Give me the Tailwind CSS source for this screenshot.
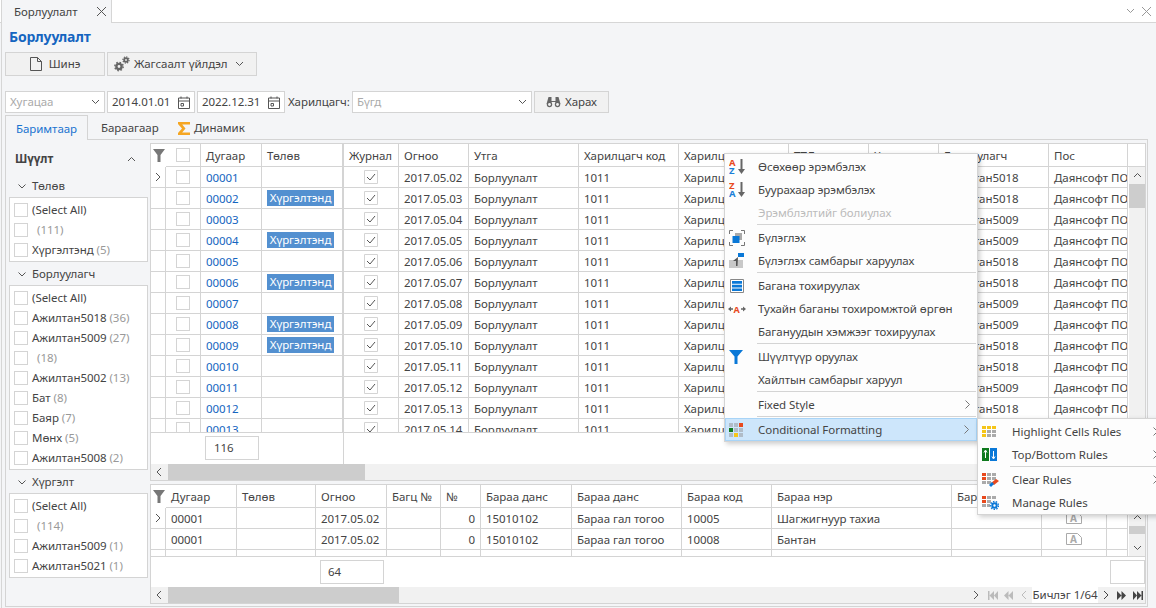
<!DOCTYPE html>
<html lang="mn">
<head>
<meta charset="utf-8">
<title>Борлуулалт</title>
<script src="https://cdn.jsdelivr.net/npm/@tailwindcss/browser@4"></script>
</head>
<body class="relative w-[1156px] h-[608px] overflow-hidden bg-[#f4f5f7] text-[11.5px] tracking-[-0.05px] leading-[20px] text-[#444] font-['Noto_Sans',sans-serif]">

<!-- document tab bar -->
<div class="flex h-[23px] bg-white border-b border-[#d6d6d6]">
  <div class="flex items-center w-[111px] pl-[12px] bg-[#f4f5f7] border-l border-r border-[#d6d6d6] ml-px -mb-px">
    <span class="w-[82px]">Борлуулалт</span>
    <svg width="11" height="11" viewBox="0 0 11 11" class="stroke-[#555]"><path d="M1 1l9 9M10 1l-9 9"/></svg>
  </div>
  <div class="flex-1 flex items-center justify-end gap-[6px] pr-[4px]">
    <svg width="9" height="6" viewBox="0 0 9 6" class="fill-none stroke-[#999]"><path d="M1 1l3.500 3.500L8 1"/></svg>
    <svg width="11" height="11" viewBox="0 0 11 11" class="stroke-[#999]"><path d="M1 1l9 9M10 1l-9 9"/></svg>
  </div>
</div>

<div class="h-[585px] ml-px pl-[3px] border-l border-[#d6d6d6]">
  <div class="h-[29px] pt-[4px] pl-[4px] text-[14px] font-bold tracking-[-0.2px] text-[#1565c0]">Борлуулалт</div>

  <!-- toolbar -->
  <div class="flex gap-[2px] h-[24px]">
    <button class="flex items-center justify-center gap-[7px] w-[100px] border border-[#d4d4d4] bg-[#f1f1f1]">
      <svg width="12" height="14" viewBox="0 0 12 14" class="fill-none stroke-[#555]"><path d="M.5.500h7l4 4v9H.500zM7.500.500v4h4"/></svg>
      Шинэ
    </button>
    <button class="flex items-center w-[150px] pl-[6px] gap-[4px] border border-[#d4d4d4] bg-[#f1f1f1]">
      <svg width="16" height="16" viewBox="0 0 16 16" class="fill-none stroke-[#666]"><circle cx="5" cy="10.500" r="2.600" stroke-width="2.400"/><circle cx="5" cy="10.500" r="4.200" stroke-width="1.400" stroke-dasharray="1.600 1.700"/><circle cx="12" cy="4" r="1.800" stroke-width="1.800"/><circle cx="12" cy="4" r="3.100" stroke-width="1.200" stroke-dasharray="1.300 1.100"/></svg>
      <span>Жагсаалт үйлдэл</span>
      <svg width="9" height="6" viewBox="0 0 9 6" class="ml-[3px] fill-none stroke-[#555]"><path d="M1 1l3.500 3.500L8 1"/></svg>
    </button>
  </div>

  <!-- filter row -->
  <div class="flex items-center gap-[2px] h-[22px] mt-[15px]">
    <div class="flex items-center justify-between w-[100px] h-full px-[4px] bg-white border border-[#d4d4d4] text-[#aaa]">Хугацаа
      <svg width="9" height="6" viewBox="0 0 9 6" class="fill-none stroke-[#555]"><path d="M1 1l3.500 3.500L8 1"/></svg></div>
    <div class="flex items-center justify-between w-[88px] h-full px-[4px] bg-white border border-[#d4d4d4]">2014.01.01
      <svg width="12" height="13" viewBox="0 0 12 13" class="fill-none stroke-[#555]"><path d="M.5 2h11v10.500H.500zM.5 5h11M3 .5v2M9 .5v2M3 7.500h2.500v2.500H3z"/></svg></div>
    <div class="flex items-center justify-between w-[88px] h-full px-[4px] bg-white border border-[#d4d4d4]">2022.12.31
      <svg width="12" height="13" viewBox="0 0 12 13" class="fill-none stroke-[#555]"><path d="M.5 2h11v10.500H.500zM.5 5h11M3 .5v2M9 .5v2M3 7.500h2.500v2.500H3z"/></svg></div>
    <span class="w-[63px] pl-[1px] whitespace-nowrap">Харилцагч:</span>
    <div class="flex items-center justify-between w-[180px] h-full px-[4px] bg-white border border-[#d4d4d4] text-[#aaa]">Бүгд
      <svg width="9" height="6" viewBox="0 0 9 6" class="fill-none stroke-[#555]"><path d="M1 1l3.500 3.500L8 1"/></svg></div>
    <button class="flex items-center justify-center gap-[4px] w-[75px] h-full border border-[#d4d4d4] bg-[#f1f1f1]">
      <svg width="15" height="12" viewBox="0 0 15 12" class="fill-[#666]"><path d="M2.500 1h3v4h4V1h3l2 7H9.500V6h-4v2H.500z"/><circle cx="3.500" cy="8.500" r="2.700"/><circle cx="11.500" cy="8.500" r="2.700"/><circle cx="3.500" cy="8.500" r="1.400" fill="#f1f1f1"/><circle cx="11.500" cy="8.500" r="1.400" fill="#f1f1f1"/></svg>
      Харах
    </button>
  </div>

  <!-- tabs -->
  <div class="flex h-[24px] mt-[2px] relative z-10">
    <div class="flex items-center justify-center w-[83px] h-[25px] pt-[2px] border border-b-0 border-[#d4d4d4] bg-[#f4f5f7] text-[#1a73d0]">Баримтаар</div>
    <div class="flex items-center w-[77px] pl-[13px] pt-[2px]">Бараагаар</div>
    <div class="flex items-center pl-[13px] pt-[2px] gap-[4px]">
      <svg width="12" height="13" viewBox="0 0 12 13" class="fill-[#f5a623]"><path d="M0 0h12v2.500H4.200L7.500 6.500 4.200 10.500H12V13H0V11L4 6.500 0 2z"/></svg>
      Динамик
    </div>
  </div>

  <!-- panel -->
  <div class="flex w-[1143px] h-[468px] border border-[#d4d4d4]">
    <!-- left filter panel -->
    <div class="w-[144px] shrink-0 pl-[3px] pr-[2px]">
      <div class="flex items-center justify-between h-[36px] pt-[2px] pl-[6px] pr-[12px] font-bold">Шүүлт
        <svg width="9" height="6" viewBox="0 0 9 6" class="fill-none stroke-[#555]"><path d="M1 5l3.500-3.500L8 5"/></svg></div>

      <div class="flex items-center gap-[6px] h-[20px] pl-[9px]"><svg width="8" height="5" viewBox="0 0 8 5" class="fill-none stroke-[#555]"><path d="M.5.500L4 4 7.500.500"/></svg>Төлөв</div>
      <div class="h-[65px] mt-px pt-[2px] pl-[4px] bg-white border border-[#d4d4d4]">
        <div class="flex items-center gap-[4px] h-[20px]"><i class="w-[14px] h-[14px] border border-[#d4d4d4]"></i>(Select All)</div>
        <div class="flex items-center gap-[4px] h-[20px] text-[#999]"><i class="w-[14px] h-[14px] border border-[#d4d4d4]"></i><span class="pl-[5px]">(111)</span></div>
        <div class="flex items-center gap-[4px] h-[20px]"><i class="w-[14px] h-[14px] border border-[#d4d4d4]"></i><span>Хүргэлтэнд <span class="text-[#999]">(5)</span></span></div>
      </div>

      <div class="flex items-center gap-[6px] h-[20px] mt-[2px] pl-[9px]"><svg width="8" height="5" viewBox="0 0 8 5" class="fill-none stroke-[#555]"><path d="M.5.500L4 4 7.500.500"/></svg>Борлуулагч</div>
      <div class="h-[185px] mt-px pt-[2px] pl-[4px] bg-white border border-[#d4d4d4]">
        <div class="flex items-center gap-[4px] h-[20px]"><i class="w-[14px] h-[14px] border border-[#d4d4d4]"></i>(Select All)</div>
        <div class="flex items-center gap-[4px] h-[20px]"><i class="w-[14px] h-[14px] border border-[#d4d4d4]"></i><span>Ажилтан5018 <span class="text-[#999]">(36)</span></span></div>
        <div class="flex items-center gap-[4px] h-[20px]"><i class="w-[14px] h-[14px] border border-[#d4d4d4]"></i><span>Ажилтан5009 <span class="text-[#999]">(27)</span></span></div>
        <div class="flex items-center gap-[4px] h-[20px] text-[#999]"><i class="w-[14px] h-[14px] border border-[#d4d4d4]"></i><span class="pl-[5px]">(18)</span></div>
        <div class="flex items-center gap-[4px] h-[20px]"><i class="w-[14px] h-[14px] border border-[#d4d4d4]"></i><span>Ажилтан5002 <span class="text-[#999]">(13)</span></span></div>
        <div class="flex items-center gap-[4px] h-[20px]"><i class="w-[14px] h-[14px] border border-[#d4d4d4]"></i><span>Бат <span class="text-[#999]">(8)</span></span></div>
        <div class="flex items-center gap-[4px] h-[20px]"><i class="w-[14px] h-[14px] border border-[#d4d4d4]"></i><span>Баяр <span class="text-[#999]">(7)</span></span></div>
        <div class="flex items-center gap-[4px] h-[20px]"><i class="w-[14px] h-[14px] border border-[#d4d4d4]"></i><span>Мөнх <span class="text-[#999]">(5)</span></span></div>
        <div class="flex items-center gap-[4px] h-[20px]"><i class="w-[14px] h-[14px] border border-[#d4d4d4]"></i><span>Ажилтан5008 <span class="text-[#999]">(2)</span></span></div>
      </div>

      <div class="flex items-center gap-[6px] h-[20px] mt-[2px] pl-[9px]"><svg width="8" height="5" viewBox="0 0 8 5" class="fill-none stroke-[#555]"><path d="M.5.500L4 4 7.500.500"/></svg>Хүргэлт</div>
      <div class="h-[85px] mt-px pt-[2px] pl-[4px] bg-white border border-[#d4d4d4]">
        <div class="flex items-center gap-[4px] h-[20px]"><i class="w-[14px] h-[14px] border border-[#d4d4d4]"></i>(Select All)</div>
        <div class="flex items-center gap-[4px] h-[20px] text-[#999]"><i class="w-[14px] h-[14px] border border-[#d4d4d4]"></i><span class="pl-[5px]">(114)</span></div>
        <div class="flex items-center gap-[4px] h-[20px]"><i class="w-[14px] h-[14px] border border-[#d4d4d4]"></i><span>Ажилтан5009 <span class="text-[#999]">(1)</span></span></div>
        <div class="flex items-center gap-[4px] h-[20px]"><i class="w-[14px] h-[14px] border border-[#d4d4d4]"></i><span>Ажилтан5021 <span class="text-[#999]">(1)</span></span></div>
      </div>
    </div>

    <!-- grids -->
    <div class="w-[996px] shrink-0 pt-[3px]">
      <!-- master grid -->
      <div class="h-[338px] bg-white border border-[#d4d4d4] overflow-hidden">
        <div class="relative h-[289px] overflow-hidden border-b border-[#d4d4d4]">
          <div class="grid grid-cols-[15px_35px_61px_81px_1px_55px_70px_110px_100px_110px_80px_70px_110px_79px_17px] h-[23px] *:border-r *:border-b *:border-[#d4d4d4] *:px-[5px] *:overflow-hidden *:whitespace-nowrap leading-[24px]">
            <div class="!border-0 !px-0 flex items-center justify-center"><svg width="12" height="13" viewBox="0 0 12 13" class="fill-[#777]"><path d="M0 0h12L7.500 6v7h-3V6z"/></svg></div>
            <div class="flex items-center justify-center"><i class="w-[14px] h-[14px] border border-[#d4d4d4]"></i></div>
            <div>Дугаар</div><div>Төлөв</div><div class="!px-0"></div><div>Журнал</div><div>Огноо</div><div>Утга</div><div>Харилцагч код</div><div>Харилцагч</div><div>ТТД</div><div>Хаяг</div><div>Борлуулагч</div><div>Пос</div><div class="!border-r-0"></div>
          </div>
          <div class="grid grid-cols-[15px_35px_61px_81px_1px_55px_70px_110px_100px_110px_80px_70px_110px_79px] auto-rows-[21px] leading-[22px] *:border-r *:border-b *:border-[#d4d4d4] *:px-[5px] *:overflow-hidden *:whitespace-nowrap">
            <div class="!px-0 flex items-center justify-center"><svg width="6" height="10" viewBox="0 0 6 10" class="fill-none stroke-[#555]"><path d="M1 1l4 4-4 4"/></svg></div><div class="flex items-center justify-center"><i class="w-[14px] h-[14px] border border-[#d4d4d4]"></i></div><div class="text-[#1565c0]">00001</div><div></div><div class="!px-0"></div><div class="flex items-center justify-center"><svg width="14" height="14" viewBox="0 0 14 14" class="fill-none stroke-[#555]"><path d="M.5.500h13v13H.500z" stroke="#d4d4d4"/><path d="M3 7l3 3 5-6"/></svg></div><div>2017.05.02</div><div>Борлуулалт</div><div>1011</div><div>Харилцагч</div><div></div><div></div><div>Ажилтан5018</div><div>Даянсофт ПОС</div>
            <div class="!px-0"></div><div class="flex items-center justify-center"><i class="w-[14px] h-[14px] border border-[#d4d4d4]"></i></div><div class="text-[#1565c0]">00002</div><div class="flex items-center"><span class="w-[67px] h-[16px] leading-[16px] text-center text-white bg-[#5390d0]">Хүргэлтэнд</span></div><div class="!px-0"></div><div class="flex items-center justify-center"><svg width="14" height="14" viewBox="0 0 14 14" class="fill-none stroke-[#555]"><path d="M.5.500h13v13H.500z" stroke="#d4d4d4"/><path d="M3 7l3 3 5-6"/></svg></div><div>2017.05.03</div><div>Борлуулалт</div><div>1011</div><div>Харилцагч</div><div></div><div></div><div>Ажилтан5018</div><div>Даянсофт ПОС</div>
            <div class="!px-0"></div><div class="flex items-center justify-center"><i class="w-[14px] h-[14px] border border-[#d4d4d4]"></i></div><div class="text-[#1565c0]">00003</div><div></div><div class="!px-0"></div><div class="flex items-center justify-center"><svg width="14" height="14" viewBox="0 0 14 14" class="fill-none stroke-[#555]"><path d="M.5.500h13v13H.500z" stroke="#d4d4d4"/><path d="M3 7l3 3 5-6"/></svg></div><div>2017.05.04</div><div>Борлуулалт</div><div>1011</div><div>Харилцагч</div><div></div><div></div><div>Ажилтан5009</div><div>Даянсофт ПОС</div>
            <div class="!px-0"></div><div class="flex items-center justify-center"><i class="w-[14px] h-[14px] border border-[#d4d4d4]"></i></div><div class="text-[#1565c0]">00004</div><div class="flex items-center"><span class="w-[67px] h-[16px] leading-[16px] text-center text-white bg-[#5390d0]">Хүргэлтэнд</span></div><div class="!px-0"></div><div class="flex items-center justify-center"><svg width="14" height="14" viewBox="0 0 14 14" class="fill-none stroke-[#555]"><path d="M.5.500h13v13H.500z" stroke="#d4d4d4"/><path d="M3 7l3 3 5-6"/></svg></div><div>2017.05.05</div><div>Борлуулалт</div><div>1011</div><div>Харилцагч</div><div></div><div></div><div>Ажилтан5009</div><div>Даянсофт ПОС</div>
            <div class="!px-0"></div><div class="flex items-center justify-center"><i class="w-[14px] h-[14px] border border-[#d4d4d4]"></i></div><div class="text-[#1565c0]">00005</div><div></div><div class="!px-0"></div><div class="flex items-center justify-center"><svg width="14" height="14" viewBox="0 0 14 14" class="fill-none stroke-[#555]"><path d="M.5.500h13v13H.500z" stroke="#d4d4d4"/><path d="M3 7l3 3 5-6"/></svg></div><div>2017.05.06</div><div>Борлуулалт</div><div>1011</div><div>Харилцагч</div><div></div><div></div><div>Ажилтан5018</div><div>Даянсофт ПОС</div>
            <div class="!px-0"></div><div class="flex items-center justify-center"><i class="w-[14px] h-[14px] border border-[#d4d4d4]"></i></div><div class="text-[#1565c0]">00006</div><div class="flex items-center"><span class="w-[67px] h-[16px] leading-[16px] text-center text-white bg-[#5390d0]">Хүргэлтэнд</span></div><div class="!px-0"></div><div class="flex items-center justify-center"><svg width="14" height="14" viewBox="0 0 14 14" class="fill-none stroke-[#555]"><path d="M.5.500h13v13H.500z" stroke="#d4d4d4"/><path d="M3 7l3 3 5-6"/></svg></div><div>2017.05.07</div><div>Борлуулалт</div><div>1011</div><div>Харилцагч</div><div></div><div></div><div>Ажилтан5018</div><div>Даянсофт ПОС</div>
            <div class="!px-0"></div><div class="flex items-center justify-center"><i class="w-[14px] h-[14px] border border-[#d4d4d4]"></i></div><div class="text-[#1565c0]">00007</div><div></div><div class="!px-0"></div><div class="flex items-center justify-center"><svg width="14" height="14" viewBox="0 0 14 14" class="fill-none stroke-[#555]"><path d="M.5.500h13v13H.500z" stroke="#d4d4d4"/><path d="M3 7l3 3 5-6"/></svg></div><div>2017.05.08</div><div>Борлуулалт</div><div>1011</div><div>Харилцагч</div><div></div><div></div><div>Ажилтан5009</div><div>Даянсофт ПОС</div>
            <div class="!px-0"></div><div class="flex items-center justify-center"><i class="w-[14px] h-[14px] border border-[#d4d4d4]"></i></div><div class="text-[#1565c0]">00008</div><div class="flex items-center"><span class="w-[67px] h-[16px] leading-[16px] text-center text-white bg-[#5390d0]">Хүргэлтэнд</span></div><div class="!px-0"></div><div class="flex items-center justify-center"><svg width="14" height="14" viewBox="0 0 14 14" class="fill-none stroke-[#555]"><path d="M.5.500h13v13H.500z" stroke="#d4d4d4"/><path d="M3 7l3 3 5-6"/></svg></div><div>2017.05.09</div><div>Борлуулалт</div><div>1011</div><div>Харилцагч</div><div></div><div></div><div>Ажилтан5009</div><div>Даянсофт ПОС</div>
            <div class="!px-0"></div><div class="flex items-center justify-center"><i class="w-[14px] h-[14px] border border-[#d4d4d4]"></i></div><div class="text-[#1565c0]">00009</div><div class="flex items-center"><span class="w-[67px] h-[16px] leading-[16px] text-center text-white bg-[#5390d0]">Хүргэлтэнд</span></div><div class="!px-0"></div><div class="flex items-center justify-center"><svg width="14" height="14" viewBox="0 0 14 14" class="fill-none stroke-[#555]"><path d="M.5.500h13v13H.500z" stroke="#d4d4d4"/><path d="M3 7l3 3 5-6"/></svg></div><div>2017.05.10</div><div>Борлуулалт</div><div>1011</div><div>Харилцагч</div><div></div><div></div><div>Ажилтан5018</div><div>Даянсофт ПОС</div>
            <div class="!px-0"></div><div class="flex items-center justify-center"><i class="w-[14px] h-[14px] border border-[#d4d4d4]"></i></div><div class="text-[#1565c0]">00010</div><div></div><div class="!px-0"></div><div class="flex items-center justify-center"><svg width="14" height="14" viewBox="0 0 14 14" class="fill-none stroke-[#555]"><path d="M.5.500h13v13H.500z" stroke="#d4d4d4"/><path d="M3 7l3 3 5-6"/></svg></div><div>2017.05.11</div><div>Борлуулалт</div><div>1011</div><div>Харилцагч</div><div></div><div></div><div>Ажилтан5018</div><div>Даянсофт ПОС</div>
            <div class="!px-0"></div><div class="flex items-center justify-center"><i class="w-[14px] h-[14px] border border-[#d4d4d4]"></i></div><div class="text-[#1565c0]">00011</div><div></div><div class="!px-0"></div><div class="flex items-center justify-center"><svg width="14" height="14" viewBox="0 0 14 14" class="fill-none stroke-[#555]"><path d="M.5.500h13v13H.500z" stroke="#d4d4d4"/><path d="M3 7l3 3 5-6"/></svg></div><div>2017.05.12</div><div>Борлуулалт</div><div>1011</div><div>Харилцагч</div><div></div><div></div><div>Ажилтан5009</div><div>Даянсофт ПОС</div>
            <div class="!px-0"></div><div class="flex items-center justify-center"><i class="w-[14px] h-[14px] border border-[#d4d4d4]"></i></div><div class="text-[#1565c0]">00012</div><div></div><div class="!px-0"></div><div class="flex items-center justify-center"><svg width="14" height="14" viewBox="0 0 14 14" class="fill-none stroke-[#555]"><path d="M.5.500h13v13H.500z" stroke="#d4d4d4"/><path d="M3 7l3 3 5-6"/></svg></div><div>2017.05.13</div><div>Борлуулалт</div><div>1011</div><div>Харилцагч</div><div></div><div></div><div>Ажилтан5018</div><div>Даянсофт ПОС</div>
            <div class="!px-0"></div><div class="flex items-center justify-center"><i class="w-[14px] h-[14px] border border-[#d4d4d4]"></i></div><div class="text-[#1565c0]">00013</div><div></div><div class="!px-0"></div><div class="flex items-center justify-center"><svg width="14" height="14" viewBox="0 0 14 14" class="fill-none stroke-[#555]"><path d="M.5.500h13v13H.500z" stroke="#d4d4d4"/><path d="M3 7l3 3 5-6"/></svg></div><div>2017.05.14</div><div>Борлуулалт</div><div>1011</div><div>Харилцагч</div><div></div><div></div><div>Ажилтан5018</div><div>Даянсофт ПОС</div>
          </div>
          <!-- vertical scrollbar lies over the row area -->
          <div class="absolute right-0 top-[23px] bottom-0 w-[16px] bg-[#f1f1f1]">
            <svg width="9" height="6" viewBox="0 0 9 6" class="mx-auto mt-[5px] fill-none stroke-[#555]"><path d="M1 5l3.500-3.500L8 5"/></svg>
            <div class="h-[24px] mt-[6px] bg-[#cdcdcd]"></div>
          </div>
        </div>
        <div class="flex h-[31px]">
          <div class="w-[193px] h-full border-r border-[#d4d4d4] pl-[54px] pt-[3px]"><div class="w-[54px] h-[24px] pl-[8px] leading-[22px] border border-[#d4d4d4]">116</div></div>
        </div>
        <div class="flex items-center h-[16px] bg-[#f1f1f1]">
          <svg width="6" height="10" viewBox="0 0 6 10" class="ml-[5px] mr-[6px] fill-none stroke-[#555]"><path d="M5 1L1 5l4 4"/></svg>
          <div class="w-[197px] h-full bg-[#cdcdcd]"></div>
        </div>
      </div>

      <!-- detail grid -->
      <div class="h-[120px] mt-[3px] bg-white border border-[#d4d4d4] overflow-hidden">
        <div class="relative h-[72px] overflow-hidden border-b border-[#d4d4d4]">
          <div class="grid grid-cols-[15px_71px_79px_71px_54px_40px_91px_110px_90px_180px_90px_65px_21px_17px] h-[23px] *:border-r *:border-b *:border-[#d4d4d4] *:px-[5px] *:overflow-hidden *:whitespace-nowrap leading-[24px]">
            <div class="!border-0 !px-0 flex items-center justify-center"><svg width="12" height="13" viewBox="0 0 12 13" class="fill-[#777]"><path d="M0 0h12L7.500 6v7h-3V6z"/></svg></div>
            <div>Дугаар</div><div>Төлөв</div><div>Огноо</div><div>Багц №</div><div>№</div><div>Бараа данс</div><div>Бараа данс</div><div>Бараа код</div><div>Бараа нэр</div><div>Барааны</div><div></div><div></div><div></div>
          </div>
          <div class="grid grid-cols-[15px_71px_79px_71px_54px_40px_91px_110px_90px_180px_90px_65px_21px] auto-rows-[21px] leading-[21px] *:border-r *:border-b *:border-[#d4d4d4] *:px-[5px] *:overflow-hidden *:whitespace-nowrap">
            <div class="!px-0 flex items-center justify-center"><svg width="6" height="10" viewBox="0 0 6 10" class="fill-none stroke-[#555]"><path d="M1 1l4 4-4 4"/></svg></div><div>00001</div><div></div><div>2017.05.02</div><div></div><div class="text-right">0</div><div>15010102</div><div>Бараа гал тогоо</div><div>10005</div><div>Шагжигнуур тахиа</div><div></div><div class="flex items-center justify-center"><svg width="16" height="12" viewBox="0 0 16 12"><path d="M.5.500h11l4 4v7H.500z" fill="#fff" stroke="#aaa"/><text x="4" y="10" font-size="10" font-weight="700" fill="#aaa">A</text></svg></div><div></div>
            <div class="!px-0"></div><div>00001</div><div></div><div>2017.05.02</div><div></div><div class="text-right">0</div><div>15010102</div><div>Бараа гал тогоо</div><div>10008</div><div>Бантан</div><div></div><div class="flex items-center justify-center"><svg width="16" height="12" viewBox="0 0 16 12"><path d="M.5.500h11l4 4v7H.500z" fill="#fff" stroke="#aaa"/><text x="4" y="10" font-size="10" font-weight="700" fill="#aaa">A</text></svg></div><div></div>
            <div class="!px-0"></div><div></div><div></div><div></div><div></div><div></div><div></div><div></div><div></div><div></div><div></div><div></div><div></div>
          </div>
          <div class="absolute right-0 top-[23px] bottom-0 w-[16px] flex flex-col items-center bg-[#f1f1f1]">
            <svg width="9" height="6" viewBox="0 0 9 6" class="mt-[6px] fill-none stroke-[#555]"><path d="M1 5l3.500-3.500L8 5"/></svg>
            <div class="w-full h-[8px] mt-[6px] bg-[#cdcdcd]"></div>
            <svg width="9" height="6" viewBox="0 0 9 6" class="mt-[11px] fill-none stroke-[#555]"><path d="M1 1l3.500 3.500L8 1"/></svg>
          </div>
        </div>
        <div class="flex items-center justify-between h-[30px] pl-[169px]">
          <div class="w-[64px] h-[24px] pl-[7px] leading-[22px] border border-[#d4d4d4]">64</div>
          <div class="w-[35px] h-[24px] border border-[#d4d4d4]"></div>
        </div>
        <div class="flex items-center h-[16px] bg-[#f1f1f1]">
          <svg width="6" height="10" viewBox="0 0 6 10" class="ml-[5px] mr-[6px] fill-none stroke-[#555]"><path d="M5 1L1 5l4 4"/></svg>
          <div class="w-[231px] h-full bg-[#cdcdcd]"></div>
          <div class="flex-1"></div>
          <svg width="6" height="10" viewBox="0 0 6 10" class="mr-[9px] fill-none stroke-[#555]"><path d="M1 1l4 4-4 4"/></svg>
          <svg width="10" height="9" viewBox="0 0 10 9" class="mr-[6px] fill-[#bbb]"><path d="M0 0h1.500v9H0zM6 0v9L1.500 4.500zM10 0v9L6 4.500z"/></svg>
          <svg width="9" height="9" viewBox="0 0 9 9" class="mr-[8px] fill-[#bbb]"><path d="M4.500 0v9L0 4.500zM9 0v9L4.500 4.500z"/></svg>
          <svg width="6" height="10" viewBox="0 0 6 10" class="mr-[5px] fill-none stroke-[#bbb]"><path d="M5 1L1 5l4 4"/></svg>
          <div class="w-[66px] h-full bg-white leading-[16px] text-center whitespace-nowrap">Бичлэг 1/64</div>
          <svg width="6" height="10" viewBox="0 0 6 10" class="ml-[5px] mr-[8px] fill-none stroke-[#444]"><path d="M1 1l4 4-4 4"/></svg>
          <svg width="9" height="9" viewBox="0 0 9 9" class="mr-[7px] fill-[#444]"><path d="M0 0l4.500 4.500L0 9zM4.500 0L9 4.500 4.500 9z"/></svg>
          <svg width="10" height="9" viewBox="0 0 10 9" class="mr-[2px] fill-[#444]"><path d="M0 0l4 4.500L0 9zM4 0l4.500 4.500L4 9zM8.500 0H10v9H8.500z"/></svg>
        </div>
      </div>
    </div>
  </div>
</div>

<!-- context menu -->
<div class="absolute left-[724px] top-[153px] w-[254px] pt-[1px] bg-[#fdfdfd] border border-[#d4d4d4] shadow-[2px_2px_5px_rgba(0,0,0,0.2)] z-20">
  <div class="flex items-center h-[23px]"><span class="w-[33px] pl-[4px] flex"><svg width="18" height="17" viewBox="0 0 18 17"><text x="0" y="8" font-size="9.500" font-weight="700" fill="#e8491d">A</text><text x="0" y="16" font-size="9.500" font-weight="700" fill="#1a7fd8">Z</text><path d="M12.500 1v12" stroke="#666" stroke-width="2"/><path d="M9 11h7l-3.500 5z" fill="#666"/></svg></span>Өсөхөөр эрэмбэлэх</div>
  <div class="flex items-center h-[23px]"><span class="w-[33px] pl-[4px] flex"><svg width="18" height="17" viewBox="0 0 18 17"><text x="0" y="8" font-size="9.500" font-weight="700" fill="#e8491d">Z</text><text x="0" y="16" font-size="9.500" font-weight="700" fill="#1a7fd8">A</text><path d="M12.500 1v12" stroke="#666" stroke-width="2"/><path d="M9 11h7l-3.500 5z" fill="#666"/></svg></span>Буурахаар эрэмбэлэх</div>
  <div class="flex items-center h-[23px] pl-[33px] text-[#bbb]">Эрэмблэлтийг болиулах</div>
  <div class="h-[2px] ml-[32px] mr-px border-t border-[#d4d4d4]"></div>
  <div class="flex items-center h-[23px]"><span class="w-[33px] pl-[4px] flex"><svg width="16" height="16" viewBox="0 0 16 16"><path d="M.5 4V.500h3.500M12 .500h3.500V4M.5 12v3.500H4M12 15.500h3.500V12" fill="none" stroke="#777"/><path d="M6 3h7v7H6z" fill="#aaa"/><path d="M3.500 6h7v7h-7z" fill="#0a78d7"/></svg></span>Бүлэглэх</div>
  <div class="flex items-center h-[23px]"><span class="w-[33px] pl-[4px] flex"><svg width="16" height="16" viewBox="0 0 16 16"><path d="M0 7h14v8H0z" fill="#c8c8c8"/><path d="M9 0h6v4H9z" fill="#0a78d7"/><path d="M9 4L4 8h3v5h1.500z" fill="#555"/></svg></span>Бүлэглэх самбарыг харуулах</div>
  <div class="h-[2px] ml-[32px] mr-px border-t border-[#d4d4d4]"></div>
  <div class="flex items-center h-[23px]"><span class="w-[33px] pl-[5px] flex"><svg width="14" height="14" viewBox="0 0 14 14"><path d="M.5.500h13v13H.500z" fill="#fff" stroke="#888"/><path d="M2 2h10v2.700H2zM2 5.700h10v2.700H2zM2 9.400h10v2.700H2z" fill="#0a78d7"/></svg></span>Багана тохируулах</div>
  <div class="flex items-center h-[23px]"><span class="w-[33px] pl-[3px] flex"><svg width="18" height="10" viewBox="0 0 18 10"><path d="M0 5l3-2.500v5zM3 4.300h2v1.400H3zM18 5l-3-2.500v5zM13 4.300h2v1.400h-2z" fill="#666"/><text x="5.500" y="8.500" font-size="9" font-weight="700" fill="#e8491d">A</text></svg></span>Тухайн баганы тохиромжтой өргөн</div>
  <div class="flex items-center h-[23px] pl-[33px]">Багануудын хэмжээг тохируулах</div>
  <div class="h-[2px] ml-[32px] mr-px border-t border-[#d4d4d4]"></div>
  <div class="flex items-center h-[23px]"><span class="w-[33px] pl-[4px] flex"><svg width="14" height="14" viewBox="0 0 14 14"><path d="M0 0h14L8.500 6.500V14h-3V6.500z" fill="#0a78d7"/></svg></span>Шүүлтүүр оруулах</div>
  <div class="flex items-center h-[23px] pl-[33px]">Хайлтын самбарыг харуул</div>
  <div class="h-[2px] ml-[32px] mr-px border-t border-[#d4d4d4]"></div>
  <div class="flex items-center justify-between h-[23px] pl-[33px] pr-[7px]">Fixed Style<svg width="5" height="9" viewBox="0 0 5 9" class="fill-none stroke-[#777]"><path d="M.5.500l4 4-4 4"/></svg></div>
  <div class="h-[2px] ml-[32px] mr-px border-t border-[#d4d4d4]"></div>
  <div class="flex items-center justify-between h-[23px] pr-[7px] bg-[#cde6fb] border border-[#a8d4f7]"><span class="flex items-center"><span class="w-[32px] pl-[3px] flex"><svg width="14" height="14" viewBox="0 0 14 14"><path d="M0 0h4v4H0zM5 0h4v4H5zM5 5h4v4H5zM10 5h4v4h-4zM0 10h4v4H0zM10 10h4v4h-4z" fill="#b0bcc8"/><path d="M10 0h4v4h-4z" fill="#e8491d"/><path d="M0 5h4v4H0z" fill="#0f7a1e"/><path d="M5 10h4v4H5z" fill="#f5c518"/></svg></span>Conditional Formatting</span><svg width="5" height="9" viewBox="0 0 5 9" class="fill-none stroke-[#777]"><path d="M.5.500l4 4-4 4"/></svg></div>
</div>

<!-- submenu -->
<div class="absolute left-[977px] top-[418px] w-[190px] pt-[1px] bg-[#fdfdfd] border border-[#d4d4d4] shadow-[2px_2px_5px_rgba(0,0,0,0.2)] z-30">
  <div class="flex items-center justify-between h-[23px] pr-[8px]"><span class="flex items-center"><span class="w-[34px] pl-[4px] flex"><svg width="14" height="12" viewBox="0 0 14 12"><path d="M0 0h4v3H0zM5 0h4v3H5zM10 0h4v3h-4zM0 4h4v3H0zM0 8h4v3H0z" fill="#f5c518"/><path d="M5 4h4v3H5zM10 4h4v3h-4zM5 8h4v3H5zM10 8h4v3h-4z" fill="#aaa"/></svg></span>Highlight Cells Rules</span><svg width="5" height="9" viewBox="0 0 5 9" class="fill-none stroke-[#777]"><path d="M.5.500l4 4-4 4"/></svg></div>
  <div class="flex items-center justify-between h-[23px] pr-[8px]"><span class="flex items-center"><span class="w-[34px] pl-[4px] flex"><svg width="15" height="13" viewBox="0 0 15 13"><path d="M0 0h7v13H0z" fill="#0f7a1e"/><path d="M8 0h7v13H8z" fill="#0a78d7"/><path d="M3.500 10V3M2 4.500L3.500 2 5 4.500M11.500 3v7M10 8.500l1.500 2.500L13 8.500" stroke="#fff" fill="none"/></svg></span>Top/Bottom Rules</span><svg width="5" height="9" viewBox="0 0 5 9" class="fill-none stroke-[#777]"><path d="M.5.500l4 4-4 4"/></svg></div>
  <div class="h-[2px] ml-[32px] mr-px border-t border-[#d4d4d4]"></div>
  <div class="flex items-center justify-between h-[23px] pr-[8px]"><span class="flex items-center"><span class="w-[34px] pl-[4px] flex"><svg width="17" height="15" viewBox="0 0 17 15"><path d="M0 1h4v3H0zM0 5h4v3H0z" fill="#e8491d"/><path d="M5 1h4v3H5zM10 1h4v3h-4zM5 5h4v3H5zM10 5h4v3h-4zM0 9h4v3H0zM5 9h4v3H5z" fill="#aaa"/><path d="M9 11l5-4 3 2-5 4z" fill="#e8491d"/><path d="M7 13l3-3 2 2-3 3z" fill="#0a78d7"/></svg></span>Clear Rules</span><svg width="5" height="9" viewBox="0 0 5 9" class="fill-none stroke-[#777]"><path d="M.5.500l4 4-4 4"/></svg></div>
  <div class="flex items-center h-[23px]"><span class="w-[34px] pl-[4px] flex"><svg width="17" height="15" viewBox="0 0 17 15"><path d="M0 1h4v3H0zM0 5h4v3H0z" fill="#e8491d"/><path d="M5 1h4v3H5zM10 1h4v3h-4zM5 5h4v3H5zM0 9h4v3H0zM5 9h3v3H5z" fill="#aaa"/><circle cx="12.500" cy="10.500" r="2.200" fill="none" stroke="#0a78d7" stroke-width="2"/><circle cx="12.500" cy="10.500" r="4" fill="none" stroke="#0a78d7" stroke-width="1.400" stroke-dasharray="1.500 1.300"/></svg></span>Manage Rules</div>
</div>
</body>
</html>
